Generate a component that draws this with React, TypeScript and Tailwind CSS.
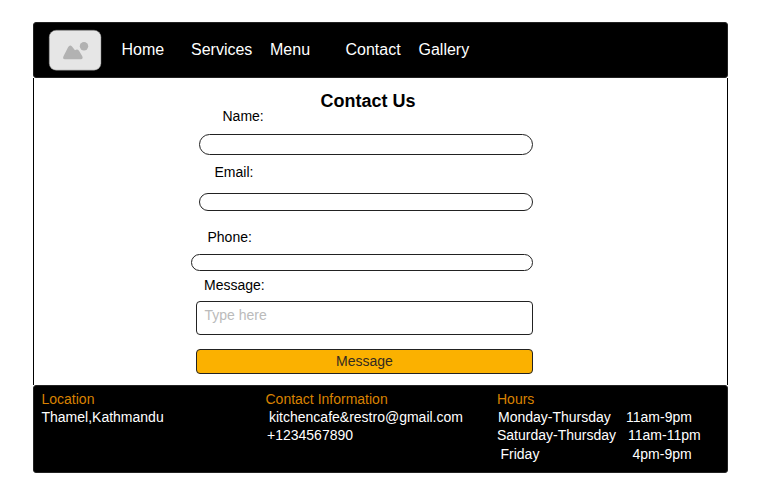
import React from "react";

const navItems = [
  { label: "Home", space: "ml-[19.5px] w-[69.5px]" },
  { label: "Services", space: "w-[79px]" },
  { label: "Menu", space: "w-[75.5px]" },
  { label: "Contact", space: "w-[73px]" },
  { label: "Gallery", space: "" },
];

const hours = [
  { days: "Monday-Thursday", time: "11am-9pm", row: "h-[18px] pl-px", col: "w-[128px]" },
  { days: "Saturday-Thursday", time: "11am-11pm", row: "h-[18px]", col: "w-[131px]" },
  { days: "Friday", time: "4pm-9pm", row: "h-[19px] pl-[3.5px] pt-px", col: "w-[132px]" },
];

function Logo() {
  return (
    <svg width="54" height="42" viewBox="0 0 54 42" className="shrink-0">
      <rect x="1.2" y="1.2" width="51.8" height="40" rx="7" fill="#e6e6e6" stroke="#777" strokeWidth=".5" />
      <circle cx="36" cy="17.2" r="4.2" fill="#b2b2b2" />
      <path
        d="M15.5 27.2 L20.2 18 Q22 15 24 17.6 L27 21.2 Q29.4 19.4 31 21.8 L34.3 27.3 Q35.4 30 33 30.2 H17 Q14.2 30.1 15.5 27.2Z"
        fill="#b2b2b2"
      />
    </svg>
  );
}

function Header() {
  return (
    <header className="flex h-14 shrink-0 items-center rounded-[3px] border border-[#222] bg-black pl-[14px] text-[16px] leading-[18px] text-white">
      <Logo />
      <nav className="flex">
        {navItems.map((item) => (
          <a key={item.label} className={item.space}>
            {item.label}
          </a>
        ))}
      </nav>
    </header>
  );
}

function ContactForm() {
  return (
    <form className="flex h-[307px] shrink-0 flex-col border-x border-black pl-[157px] pt-[15px] text-[14px] leading-4 text-black">
      <h1 className="ml-[129.5px] text-[18px] font-bold leading-4">Contact Us</h1>
      <label className="-mt-px ml-[31.5px]">Name:</label>
      <input className="ml-2 mt-[10px] h-[21px] w-[334px] rounded-full border border-[#222]" />
      <label className="ml-[23.5px] mt-[9px]">Email:</label>
      <input className="ml-2 mt-[13px] h-[18px] w-[334px] rounded-full border border-[#222]" />
      <label className="ml-[16.5px] mt-[18px]">Phone:</label>
      <input className="mt-[9px] h-[17px] w-[342px] rounded-full border border-[#222]" />
      <label className="ml-[13px] mt-[6px]">Message:</label>
      <textarea
        placeholder="Type here"
        className="ml-[5px] mt-2 h-[34px] w-[337px] resize-none overflow-hidden rounded-[4px] border border-[#222] px-[7.5px] py-[5px] placeholder:text-[#bbb]"
      />
      <button
        type="button"
        className="ml-[5px] mt-[14px] h-[25px] w-[337px] rounded-[4px] border border-[#222] bg-[#fbb100] pb-0.5 text-[#332b20]"
      >
        Message
      </button>
    </form>
  );
}

function Footer() {
  return (
    <footer className="flex h-[88px] shrink-0 rounded-[3px] border border-[#222] bg-black pl-[7.5px] pt-1 text-[14px] leading-[18px] text-white">
      <section className="w-[224px]">
        <h2 className="text-[#d98200]">Location</h2>
        <p>Thamel,Kathmandu</p>
      </section>
      <section className="w-[231.5px]">
        <h2 className="text-[#d98200]">Contact Information</h2>
        <p className="pl-[3.5px]">kitchencafe&amp;restro@gmail.com</p>
        <p className="pl-[1.5px]">+1234567890</p>
      </section>
      <section>
        <h2 className="text-[#d98200]">Hours</h2>
        {hours.map((entry) => (
          <div key={entry.days} className={`flex ${entry.row}`}>
            <span className={entry.col}>{entry.days}</span>
            <span>{entry.time}</span>
          </div>
        ))}
      </section>
    </footer>
  );
}

export default function App() {
  return (
    <div className="h-[499px] w-[764px] bg-white pl-[33px] pt-[22px] font-['Liberation_Sans',Arial,sans-serif]">
      <main className="flex w-[695px] flex-col">
        <Header />
        <ContactForm />
        <Footer />
      </main>
    </div>
  );
}
